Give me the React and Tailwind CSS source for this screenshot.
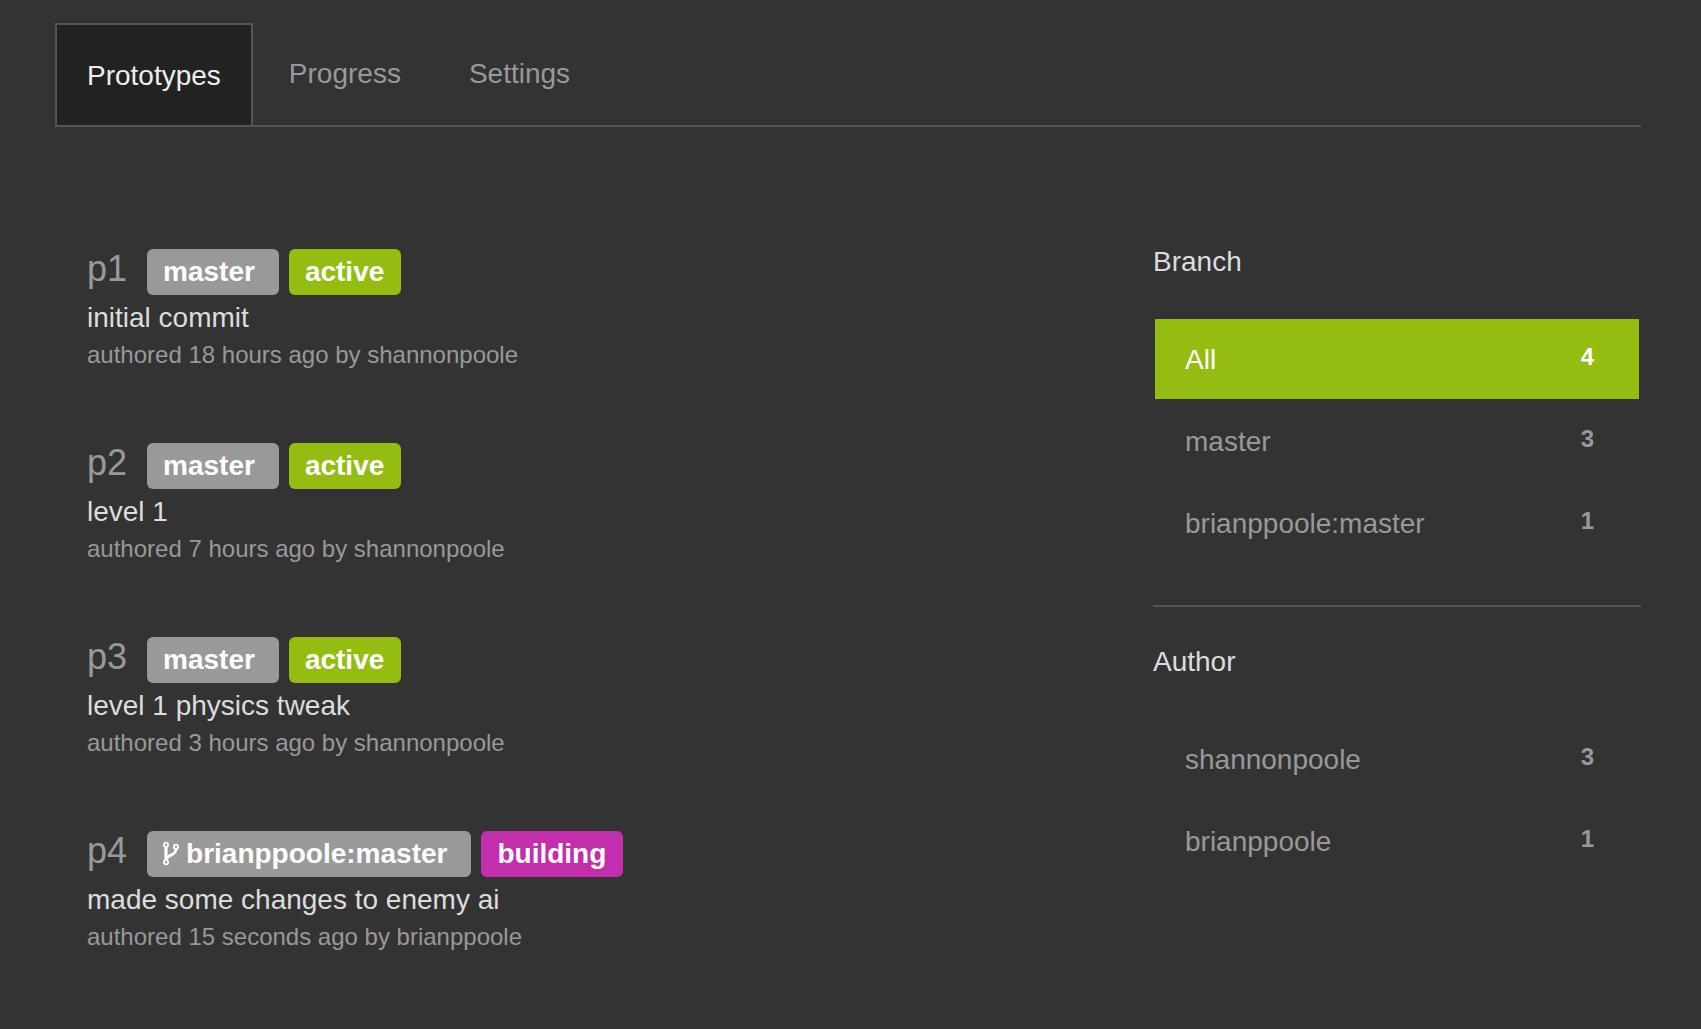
const tabs = ["Prototypes", "Progress", "Settings"];

const prototypes = [
  { id: "p1", branch: "master", status: "active", message: "initial commit", meta: "authored 18 hours ago by shannonpoole" },
  { id: "p2", branch: "master", status: "active", message: "level 1", meta: "authored 7 hours ago by shannonpoole" },
  { id: "p3", branch: "master", status: "active", message: "level 1 physics tweak", meta: "authored 3 hours ago by shannonpoole" },
  { id: "p4", branch: "brianppoole:master", fork: true, status: "building", message: "made some changes to enemy ai", meta: "authored 15 seconds ago by brianppoole" },
];

const branches = [
  { label: "All", count: 4, selected: true },
  { label: "master", count: 3 },
  { label: "brianppoole:master", count: 1 },
];

const authors = [
  { label: "shannonpoole", count: 3 },
  { label: "brianppoole", count: 1 },
];

function BranchIcon() {
  return (
    <svg className="mr-[7px] h-6 w-4 shrink-0 self-center" viewBox="0 0 16 24" fill="none" stroke="currentColor" aria-hidden="true">
      <circle cx="3" cy="2.8" r="2.1" strokeWidth="1.8" />
      <circle cx="13" cy="4.8" r="2.1" strokeWidth="1.8" />
      <circle cx="3" cy="20.2" r="2.1" strokeWidth="1.8" />
      <path d="M3 5V18" strokeWidth="3.2" />
      <path d="M13 7C12.8 10.8 10.8 12 8 13.2C5.6 14.2 4 15.2 3.2 17.4" strokeWidth="3" />
    </svg>
  );
}

function Prototype({ item }) {
  return (
    <li>
      <div className="flex flex-wrap items-baseline">
        <h2 className="mr-5 text-[36px] leading-[38px] text-[#999]">{item.id}</h2>
        <span className="mr-2.5 flex items-baseline rounded-md bg-[#999] py-1 pr-6 pl-4 font-bold text-white">
          {item.fork && <BranchIcon />}
          {item.branch}
        </span>
        <span
          className={`rounded-md py-1 pr-[17px] pl-4 font-bold text-white ${
            item.status === "active" ? "bg-[#95bc11]" : "bg-[#c22eab]"
          }`}
        >
          {item.status}
        </span>
      </div>
      <p className="mt-1 text-[#ddd]">{item.message}</p>
      <p className="text-[24px] leading-9 text-[#999]">{item.meta}</p>
    </li>
  );
}

function FilterGroup({ title, items }) {
  return (
    <section>
      <h3 className="text-[#ddd]">{title}</h3>
      <ul className="mt-[38px] flex flex-col gap-0.5 px-0.5">
        {items.map((item) => (
          <li key={item.label}>
            <a
              href="#"
              className={`flex items-start justify-between pt-[22px] pr-[45px] pb-5 pl-[30px] ${
                item.selected ? "bg-[#95bc11] text-white" : "text-[#999]"
              }`}
            >
              <span>{item.label}</span>
              <span className="text-[24px] leading-8 font-bold">{item.count}</span>
            </a>
          </li>
        ))}
      </ul>
    </section>
  );
}

export default function App() {
  return (
    <div className="min-h-screen bg-[#333] pt-[23px] pr-[60px] pb-12 pl-[55px] font-['Liberation_Sans',Arial,sans-serif] text-[28px] leading-[38px]">
      <nav className="flex items-start border-b-2 border-[#555]">
        {tabs.map((tab, index) => (
          <a
            key={tab}
            href="#"
            className={
              index === 0
                ? "mr-0.5 border-x-2 border-t-2 border-[#555] bg-[#222] px-[30px] pt-8 pb-[30px] text-[#eee]"
                : "px-[34px] pt-8 pb-[30px] text-[#999]"
            }
          >
            {tab}
          </a>
        ))}
      </nav>
      <main className="mt-[116px] flex items-start justify-between gap-8">
        <ul className="flex min-w-0 flex-1 flex-col gap-[70px] pt-1.5 pl-8">
          {prototypes.map((item) => (
            <Prototype key={item.id} item={item} />
          ))}
        </ul>
        <aside className="w-[488px] shrink-0">
          <FilterGroup title="Branch" items={branches} />
          <hr className="mt-[42px] mb-9 border-t-2 border-[#555]" />
          <FilterGroup title="Author" items={authors} />
        </aside>
      </main>
    </div>
  );
}
